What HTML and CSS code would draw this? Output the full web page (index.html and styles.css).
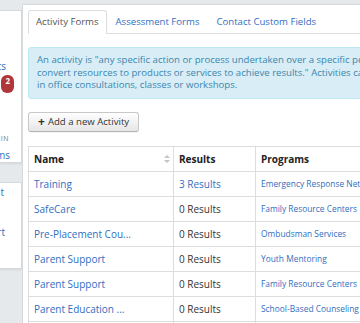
FILE: index.html
```html
<!DOCTYPE html>
<html lang="en">

<head>
  <meta charset="UTF-8" />
  <meta name="viewport" content="width=device-width, initial-scale=1.0" />
  <title>Activity Forms</title>
  <link rel="stylesheet" href="styles.css">
</head>

<body>
  <div class="page">

    <div class="sidebar">
      <div class="side-panel first">
        <div class="side-item link p15">Contacts</div>
        <div class="side-item"><span class="badge">2</span></div>
        <div class="side-head">ADMIN</div>
        <div class="side-item link p11">Forms</div>
      </div>
      <div class="side-panel second">
        <div class="side-item link p17">Account</div>
        <div class="side-item link p16">Report</div>
      </div>
    </div>

    <div class="main">
      <ul class="tabs">
        <li class="tab active">Activity Forms</li>
        <li class="tab">Assessment Forms</li>
        <li class="tab">Contact Custom Fields</li>
      </ul>

      <div class="alert">
        An activity is "any specific action or process undertaken over a specific period of time by an organization to<br>
        convert resources to products or services to achieve results." Activities can include things like<br>
        in office consultations, classes or workshops.
      </div>

      <button class="btn"><b>+</b> Add a new Activity</button>

      <table class="grid">
        <thead>
          <tr>
            <th class="c-name">Name <span class="sort"></span></th>
            <th class="c-res">Results</th>
            <th>Programs</th>
          </tr>
        </thead>
        <tbody>
          <tr>
            <td><a href="#">Training</a></td>
            <td><a href="#">3 Results</a></td>
            <td class="prog"><a href="#">Emergency Response Network</a></td>
          </tr>
          <tr>
            <td><a href="#">SafeCare</a></td>
            <td>0 Results</td>
            <td class="prog"><a href="#">Family Resource Centers</a></td>
          </tr>
          <tr>
            <td><a href="#">Pre-Placement Cou...</a></td>
            <td>0 Results</td>
            <td class="prog"><a href="#">Ombudsman Services</a></td>
          </tr>
          <tr>
            <td><a href="#">Parent Support</a></td>
            <td>0 Results</td>
            <td class="prog"><a href="#">Youth Mentoring</a></td>
          </tr>
          <tr>
            <td><a href="#">Parent Support</a></td>
            <td>0 Results</td>
            <td class="prog"><a href="#">Family Resource Centers</a></td>
          </tr>
          <tr>
            <td><a href="#">Parent Education ...</a></td>
            <td>0 Results</td>
            <td class="prog"><a href="#">School-Based Counseling</a></td>
          </tr>
          <tr>
            <td><a href="#">Home Visiting</a></td>
            <td>0 Results</td>
            <td class="prog"><a href="#">Family Resource Centers</a></td>
          </tr>
        </tbody>
      </table>
    </div>

  </div>
</body>

</html>
```

FILE: styles.css
```css
html,
body,
div,
ul,
li,
table {
  margin: 0;
  padding: 0;
}

body {
  background: #e6e9ec;
  font-family: "Open Sans", "DejaVu Sans", sans-serif;
  font-size: 9.6px;
  color: #333;
  overflow: hidden;
}

a {
  color: #2f6fbf;
  text-decoration: none;
}

.page {
  display: flex;
  align-items: flex-start;
  width: 500px;
}

/* left nav, mostly scrolled off */
.sidebar {
  width: 22px;
  flex: none;
  padding-top: 10px;
}

.side-panel {
  background: #fff;
  border: 1px solid #d6d9dc;
  border-left: 0;
  box-shadow: 0 1px 2px rgba(0, 0, 0, 0.08);
  overflow: hidden;
}

.side-panel.first {
  height: 153px;
  padding-top: 46px;
  box-sizing: border-box;
}

.side-panel.second {
  margin-top: 19px;
  height: 87px;
  padding-top: 0;
  box-sizing: border-box;
}

.side-item,
.side-head {
  display: flex;
  justify-content: flex-end;
  white-space: nowrap;
}

.side-item {
  height: 18px;
  line-height: 18px;
  font-size: 10px;
}

.side-panel.second .side-item {
  height: 40px;
  line-height: 18px;
}

.side-item.link {
  color: #2f6fbf;
}

.p11 { padding-right: 11px; }
.p15 { padding-right: 15px; }
.p16 { padding-right: 16px; }
.p17 { padding-right: 17px; }

.side-head {
  margin-top: 39px;
  height: 14px;
  line-height: 14px;
  font-size: 7px;
  letter-spacing: 0.5px;
  color: #777;
  padding-right: 12px;
}

.badge {
  background: #b0363a;
  color: #fff;
  font-weight: bold;
  font-size: 8px;
  line-height: 11px;
  padding: 0 4px;
  border-radius: 6px;
  margin-right: 7px;
}

.main {
  flex: none;
  width: 460px;
  margin-top: 4px;
  min-height: 330px;
  background: #fff;
  border: 1px solid #d6d9dc;
  padding: 5px 5px;
  box-sizing: border-box;
}

.tabs {
  list-style: none;
  display: flex;
  border-bottom: 1px solid #ddd;
  height: 23px;
}

.tab {
  padding: 0 7px;
  line-height: 22px;
  color: #2f6fbf;
  border: 1px solid transparent;
  border-bottom: 0;
  border-radius: 3px 3px 0 0;
  margin-right: 1px;
  white-space: nowrap;
}

.tab.active {
  color: #555;
  background: #fff;
  border-color: #ddd;
  height: 23px;
}

.alert {
  margin-top: 13px;
  background: #d9edf7;
  border: 1px solid #bce8f1;
  border-radius: 3px;
  color: #3a87ad;
  padding: 6px 8px 6px 8px;
  line-height: 12.6px;
  width: 440px;
  white-space: nowrap;
}

.btn {
  display: inline-flex;
  align-items: center;
  gap: 3px;
  margin-top: 13px;
  height: 20px;
  padding: 0 9px;
  font-family: inherit;
  font-size: 9.6px;
  color: #333;
  background: linear-gradient(#ffffff, #e6e6e6);
  border: 1px solid #c8c8c8;
  border-bottom-color: #b3b3b3;
  border-radius: 3px;
  box-shadow: 0 1px 1px rgba(0, 0, 0, 0.05);
}

.btn b {
  font-size: 12px;
  line-height: 12px;
}

.grid {
  margin-top: 14px;
  border-collapse: collapse;
  width: 420px;
  table-layout: fixed;
}

.grid th,
.grid td {
  border: 1px solid #dddddd;
  height: 24px;
  padding: 0 5px;
  text-align: left;
  white-space: nowrap;
  overflow: hidden;
  font-size: 10px;
}

.grid th {
  font-weight: bold;
  color: #222;
}

.grid .c-name {
  width: 134px;
  position: relative;
}

.grid .c-res {
  width: 71px;
}

.grid td.prog {
  font-size: 8.4px;
}

.sort {
  position: absolute;
  right: 3px;
  top: 8px;
  width: 0;
  height: 0;
  border-left: 3px solid transparent;
  border-right: 3px solid transparent;
  border-bottom: 3px solid #c4c4c4;
}

.sort::after {
  content: "";
  position: absolute;
  left: -3px;
  top: 5px;
  border-left: 3px solid transparent;
  border-right: 3px solid transparent;
  border-top: 3px solid #c4c4c4;
}
```
